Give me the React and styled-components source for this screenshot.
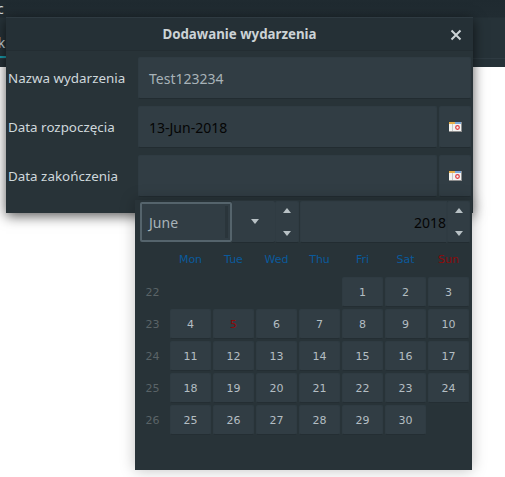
import React from "react";
import styled, { createGlobalStyle } from "styled-components";

const Global = createGlobalStyle`
  html, body { margin: 0; padding: 0; background: #fff; }
  body { width: 505px; height: 477px; overflow: hidden; font-family: "Noto Sans", sans-serif; }
`;

const Desktop = styled.div`
  position: relative;
  width: 505px;
  height: 477px;
  overflow: hidden;
  background: #fff;
`;
const BackBar = styled.div`
  height: 67px;
  background: linear-gradient(#1f2a30 0, #212c32 17px, #263238 18px, #263238 58px, #2e3a41 58px, #2e3a41 59px, #263238 59px);
  box-sizing: border-box;
  color: #cfd8dc;
  font-size: 14px;
  position: relative;
`;
const BackTop = styled.span`
  position: absolute;
  left: -3px;
  top: -1px;
`;
const BackTab = styled.span`
  position: absolute;
  left: -10px;
  top: 33px;
`;
const TabLine = styled.div`
  position: absolute;
  left: 0;
  top: 56px;
  width: 6px;
  height: 2px;
  background: #1a9bab;
`;
const Dialog = styled.div`
  position: absolute;
  left: 6px;
  top: 17px;
  width: 467px;
  height: 196px;
  box-sizing: border-box;
  background: #283338;
  box-shadow: 0 3px 12px rgba(0, 0, 0, 0.65);
  display: flex;
  flex-direction: column;
`;
const Header = styled.div`
  height: 34px;
  flex: none;
  box-sizing: border-box;
  background: #253036;
  border-top: 1px solid #2f3b42;
  border-bottom: 1px solid #232d32;
  display: flex;
  align-items: center;
  justify-content: center;
  position: relative;
  color: #ccd3d6;
  font-weight: 700;
  font-size: 13.3px;
`;
const Close = styled.svg`
  position: absolute;
  right: 11px;
  top: 11px;
`;
const Form = styled.div`
  display: flex;
  flex-direction: column;
  gap: 7px;
  padding: 6px 2px 0 2px;
`;
const Row = styled.div`
  display: flex;
  height: 42px;
  align-items: center;
`;
const Label = styled.div`
  width: 130px;
  flex: none;
  color: #cfd8dc;
  font-size: 13.4px;
  margin-top: -1px;
`;
const Field = styled.div`
  flex: 1;
  height: 42px;
  box-sizing: border-box;
  background: #313d44;
  border: 1px solid #2f3b42;
  border-bottom-color: #222c31;
  border-radius: 2px;
  padding-left: 10px;
  display: flex;
  align-items: center;
  font-size: 14px;
  color: ${(p) => (p.$dark ? "#050505" : "#a8b3b8")};
`;
const IconBtn = styled.div`
  width: 32px;
  height: 42px;
  flex: none;
  margin-left: 2px;
  box-sizing: border-box;
  background: #313d44;
  border: 1px solid #2f3b42;
  border-bottom-color: #222c31;
  border-radius: 2px;
  display: flex;
  align-items: center;
  justify-content: center;
`;
const Popup = styled.div`
  position: absolute;
  left: 135px;
  top: 200px;
  width: 337px;
  height: 270px;
  background: #283338;
  box-shadow: 0 0 14px rgba(0, 0, 0, 0.25);
  font-family: "DejaVu Sans", sans-serif;
`;
const Controls = styled.div`
  display: flex;
  height: 42px;
  padding: 1px 2px 0 5px;
  align-items: stretch;
`;
const Month = styled.div`
  width: 92px;
  margin: 1px 0;
  box-sizing: border-box;
  background: #313d44;
  border: 2px solid #55646c;
  border-radius: 2px;
  display: flex;
  align-items: center;
  padding-left: 7px;
  color: #a8b3b8;
  font-family: "Noto Sans", sans-serif;
  font-size: 14px;
  position: relative;
`;
const MonthShade = styled.span`
  position: absolute;
  right: 2px;
  top: 2px;
  bottom: 2px;
  width: 3px;
  background: #2a353b;
`;
const Drop = styled.div`
  width: 43px;
  background: #313d44;
  border-bottom: 1px solid #222c31;
  border-radius: 0 2px 2px 0;
  display: flex;
  align-items: center;
  justify-content: center;
  box-sizing: border-box;
  padding-left: 2px;
`;
const Spin = styled.div`
  width: ${(p) => p.$w}px;
  box-sizing: border-box;
  background: #313d44;
  border: 1px solid #2f3b42;
  border-bottom-color: #222c31;
  border-radius: 2px;
  display: flex;
  flex-direction: column;
  align-items: center;
  justify-content: space-between;
  padding: 6px 0;
`;
const Year = styled.div`
  width: 147px;
  margin-left: 1px;
  box-sizing: border-box;
  background: #313d44;
  border: 1px solid #2f3b42;
  border-bottom-color: #222c31;
  border-radius: 2px 0 0 2px;
  display: flex;
  align-items: center;
  justify-content: flex-end;
  color: #050505;
  font-family: "Noto Sans", sans-serif;
  font-size: 14px;
`;
const Up = styled.i`
  width: 0;
  height: 0;
  border-left: 4.5px solid transparent;
  border-right: 4.5px solid transparent;
  border-bottom: 5px solid #b8c1c5;
`;
const Down = styled.i`
  width: 0;
  height: 0;
  border-left: 4.5px solid transparent;
  border-right: 4.5px solid transparent;
  border-top: 5px solid #b8c1c5;
`;
const Grid = styled.div`
  display: grid;
  grid-template-columns: 35px repeat(7, 43px);
  grid-template-rows: 31px repeat(5, 32px);
  margin-top: 3px;
`;
const WeekDay = styled.div`
  width: 41px;
  display: flex;
  align-items: center;
  justify-content: center;
  padding-bottom: 5px;
  box-sizing: border-box;
  font-size: 11px;
  color: ${(p) => (p.$sun ? "#8c0a0a" : "#0a5a9c")};
`;
const WeekNo = styled.div`
  height: 30px;
  display: flex;
  align-items: center;
  justify-content: center;
  font-size: 11px;
  color: #5a6367;
`;
const Day = styled.div`
  width: 41px;
  height: 30px;
  box-sizing: border-box;
  background: #313d44;
  border: 1px solid #2f3b42;
  border-bottom-color: #242e33;
  border-radius: 2px;
  display: flex;
  align-items: center;
  justify-content: center;
  font-size: 11px;
  color: ${(p) => (p.$red ? "#8c0a0a" : "#b4bec3")};
`;
const Empty = styled.div``;

const CalIcon = () => (
  <svg width="13" height="10" viewBox="0 0 13 10">
    <rect x="0" y="0" width="13" height="10" fill="#f4f4f2" />
    <rect x="0" y="0" width="6" height="2" fill="#e8b04a" />
    <rect x="6" y="0" width="6" height="2" fill="#7aa6d6" />
    <rect x="3" y="2" width="1" height="7" fill="#c9c9c9" />
    <circle cx="8.5" cy="5.5" r="1.8" fill="none" stroke="#e0393e" strokeWidth="1.2" />
    <rect x="12" y="0" width="1" height="10" fill="#8e8e8e" />
    <rect x="0" y="9" width="13" height="1" fill="#8e8e8e" />
  </svg>
);

const weeks = [
  [22, [null, null, null, null, 1, 2, 3]],
  [23, [4, 5, 6, 7, 8, 9, 10]],
  [24, [11, 12, 13, 14, 15, 16, 17]],
  [25, [18, 19, 20, 21, 22, 23, 24]],
  [26, [25, 26, 27, 28, 29, 30, null]],
];
const names = ["Mon", "Tue", "Wed", "Thu", "Fri", "Sat", "Sun"];

export default function App() {
  return (
    <Desktop>
      <Global />
      <BackBar>
        <BackTop>c</BackTop>
        <BackTab>ak</BackTab>
      </BackBar>
      <TabLine />
      <Dialog>
        <Header>
          Dodawanie wydarzenia
          <Close width="12" height="12" viewBox="0 0 12 12">
            <path d="M1.5 1.5 L10.5 10.5 M10.5 1.5 L1.5 10.5" stroke="#cdd4d7" strokeWidth="2" />
          </Close>
        </Header>
        <Form>
          <Row>
            <Label>Nazwa wydarzenia</Label>
            <Field>Test123234</Field>
          </Row>
          <Row>
            <Label>Data rozpoczęcia</Label>
            <Field $dark>13-Jun-2018</Field>
            <IconBtn><CalIcon /></IconBtn>
          </Row>
          <Row>
            <Label>Data zakończenia</Label>
            <Field />
            <IconBtn><CalIcon /></IconBtn>
          </Row>
        </Form>
      </Dialog>
      <Popup>
        <Controls>
          <Month>June<MonthShade /></Month>
          <Drop><Down /></Drop>
          <Spin $w={24}><Up /><Down /></Spin>
          <Year>2018</Year>
          <Spin $w={23}><Up /><Down /></Spin>
        </Controls>
        <Grid>
          <Empty />
          {names.map((n) => (
            <WeekDay key={n} $sun={n === "Sun"}>{n}</WeekDay>
          ))}
          {weeks.map(([w, days]) => (
            <React.Fragment key={w}>
              <WeekNo>{w}</WeekNo>
              {days.map((d, i) =>
                d ? <Day key={i} $red={d === 5}>{d}</Day> : <Empty key={i} />
              )}
            </React.Fragment>
          ))}
        </Grid>
      </Popup>
    </Desktop>
  );
}
